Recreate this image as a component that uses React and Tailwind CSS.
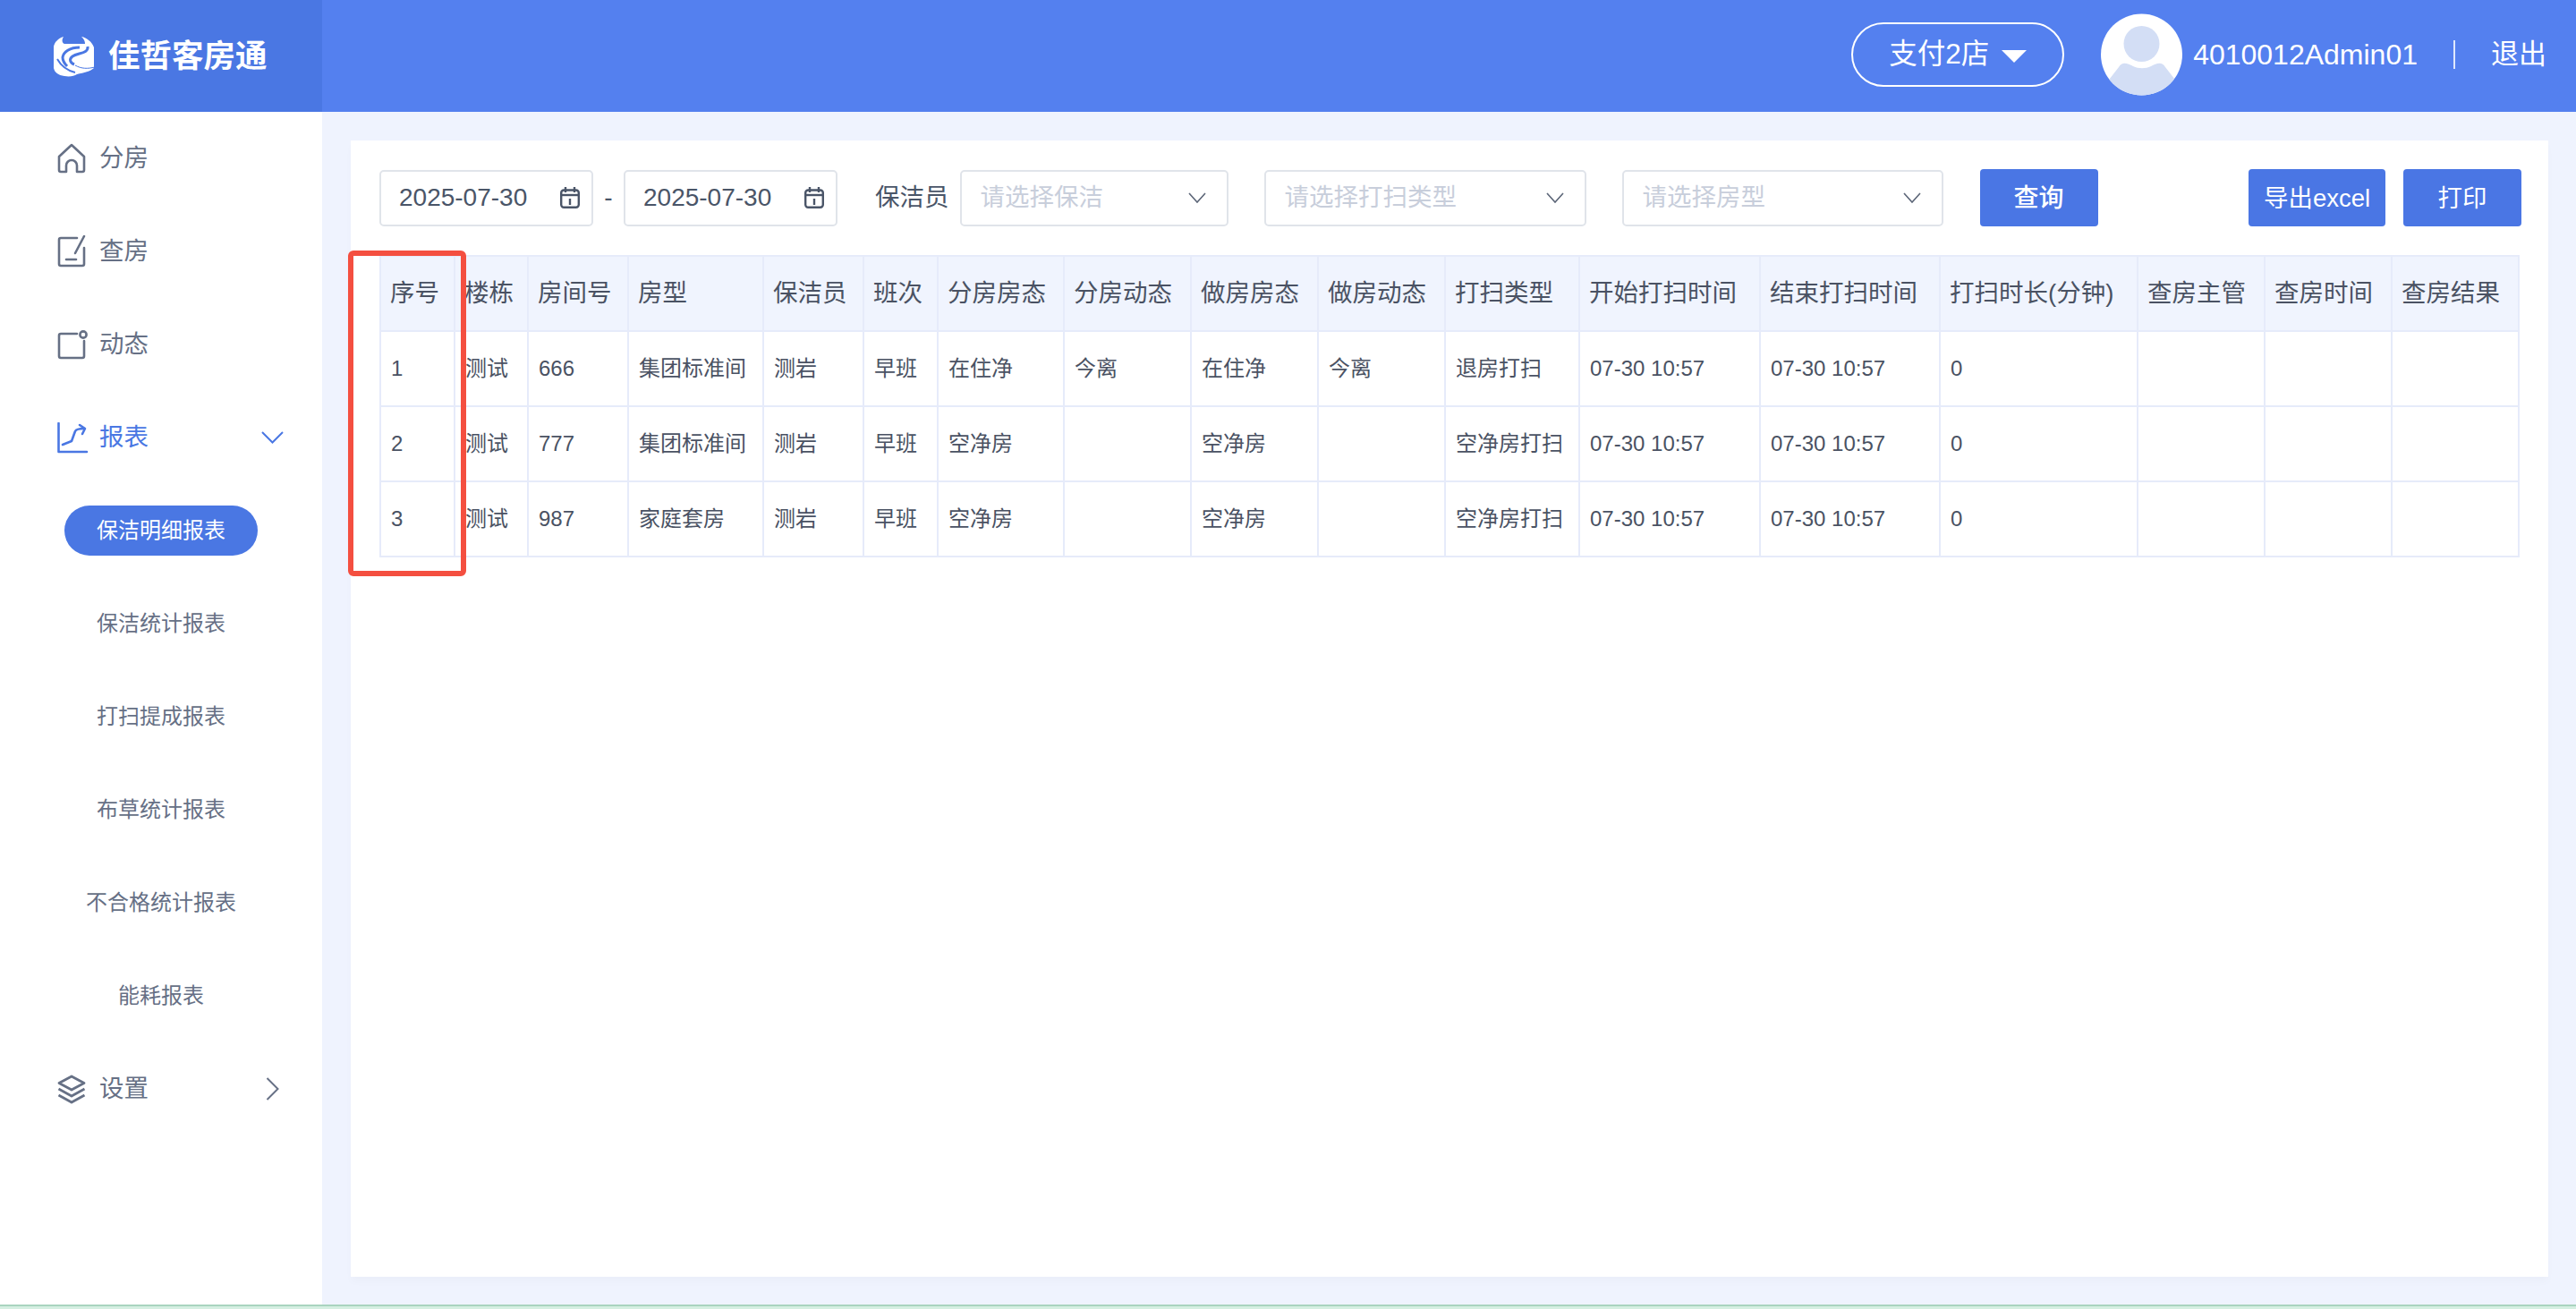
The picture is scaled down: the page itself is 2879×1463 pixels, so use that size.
const FONT = "font-['Liberation_Sans','Noto_Sans_CJK_SC',sans-serif]";

const columns = [
  { title: "序号", width: "w-[83px]" },
  { title: "楼栋", width: "w-[82px]" },
  { title: "房间号", width: "w-[112px]" },
  { title: "房型", width: "w-[151px]" },
  { title: "保洁员", width: "w-[112px]" },
  { title: "班次", width: "w-[83px]" },
  { title: "分房房态", width: "w-[141px]" },
  { title: "分房动态", width: "w-[142px]" },
  { title: "做房房态", width: "w-[142px]" },
  { title: "做房动态", width: "w-[142px]" },
  { title: "打扫类型", width: "w-[150px]" },
  { title: "开始打扫时间", width: "w-[202px]" },
  { title: "结束打扫时间", width: "w-[201px]" },
  { title: "打扫时长(分钟)", width: "w-[221px]" },
  { title: "查房主管", width: "w-[142px]" },
  { title: "查房时间", width: "w-[142px]" },
  { title: "查房结果", width: "w-[142px]" },
];

const rows = [
  ["1", "测试", "666", "集团标准间", "测岩", "早班", "在住净", "今离", "在住净", "今离", "退房打扫", "07-30 10:57", "07-30 10:57", "0", "", "", ""],
  ["2", "测试", "777", "集团标准间", "测岩", "早班", "空净房", "", "空净房", "", "空净房打扫", "07-30 10:57", "07-30 10:57", "0", "", "", ""],
  ["3", "测试", "987", "家庭套房", "测岩", "早班", "空净房", "", "空净房", "", "空净房打扫", "07-30 10:57", "07-30 10:57", "0", "", "", ""],
];

const subMenu = ["保洁明细报表", "保洁统计报表", "打扫提成报表", "布草统计报表", "不合格统计报表", "能耗报表"];

function Logo() {
  return (
    <svg width="46" height="46" viewBox="0 0 46 46" className="shrink-0">
      <path d="M11 1 C5 3 1 7 0 12 V36 C1 41 5 44 12 45 C18 46 23 45 26 43 C34 41 41 40 45 36 V13 C43 7 37 2 31 1 C34 4 35 6 35 9 H12 C9 8 9 4 11 1 Z" fill="#fff" />
      <path d="M38 12 C39 20 27 19 21 23 C17 26 18 30 23 32" fill="none" stroke="#4a77e3" strokeWidth="3" />
      <path d="M29 13 C18 13 11 18 10 24 C10 28 12 31 15 34" fill="none" stroke="#4a77e3" strokeWidth="3" />
      <path d="M4 26 C9 35 16 39 24 41" fill="none" stroke="#4a77e3" strokeWidth="2" />
      <path d="M24 33 C31 37 38 37 46 35" fill="none" stroke="#4a77e3" strokeWidth="1" />
    </svg>
  );
}

function HomeIcon() {
  return (
    <svg width="32" height="34" viewBox="0 0 32 34" fill="none" stroke="currentColor" strokeWidth="2.6" strokeLinejoin="round">
      <path d="M16 2 L30 15 V30 a2 2 0 0 1 -2 2 H22 V25 a6 6 0 0 0 -12 0 V32 H4 a2 2 0 0 1 -2 -2 V15 Z" />
    </svg>
  );
}

function CheckIcon() {
  return (
    <svg width="32" height="36" viewBox="0 0 32 36" fill="none" stroke="currentColor" strokeWidth="2.6" strokeLinecap="round">
      <path d="M22 3 H4 a2 2 0 0 0 -2 2 V32 a2 2 0 0 0 2 2 H28 a2 2 0 0 0 2 -2 V14" />
      <path d="M30 1 L20 20" />
      <path d="M10 27 H21" />
    </svg>
  );
}

function DynamicIcon() {
  return (
    <svg width="34" height="34" viewBox="0 0 34 34" fill="none" stroke="currentColor" strokeWidth="2.6" strokeLinecap="round">
      <path d="M22 5 H4 a2 2 0 0 0 -2 2 V30 a2 2 0 0 0 2 2 H28 a2 2 0 0 0 2 -2 V13" />
      <circle cx="29" cy="6" r="3.6" />
    </svg>
  );
}

function ChartIcon() {
  return (
    <svg width="35" height="35" viewBox="0 0 35 35" fill="none" stroke="currentColor" strokeWidth="2.6" strokeLinecap="round" strokeLinejoin="round">
      <path d="M1.5 1 V33 H33" />
      <path d="M6 25 L16 21 L20 10 C21 8 24 7 30 7" />
      <path d="M25 3 L31 7 L28 13" />
    </svg>
  );
}

function LayersIcon() {
  return (
    <svg width="32" height="33" viewBox="0 0 32 33" fill="none" stroke="currentColor" strokeWidth="2.8" strokeLinejoin="round">
      <path d="M16 2 L30 9.5 L16 17 L2 9.5 Z" />
      <path d="M1.5 16 L16 24 L30.5 16" />
      <path d="M1.5 23 L16 31 L30.5 23" />
    </svg>
  );
}

function CalendarIcon() {
  return (
    <svg width="22" height="24" viewBox="0 0 22 24" fill="none" stroke="#4a5568" strokeWidth="2.4" className="shrink-0">
      <rect x="1.2" y="3.5" width="19.6" height="19.3" rx="3" />
      <path d="M1.2 9 H20.8" />
      <path d="M6 0 V6 M16 0 V6" />
      <path d="M11 13 V20" />
    </svg>
  );
}

function SmallChevron() {
  return (
    <svg width="20" height="12" viewBox="0 0 20 12" fill="none" stroke="#5b6577" strokeWidth="1.6" className="shrink-0">
      <path d="M1 1 L10 11 L19 1" />
    </svg>
  );
}

function MenuDownArrow() {
  return (
    <svg width="25" height="14" viewBox="0 0 25 14" fill="none" stroke="currentColor" strokeWidth="2" className="mr-[-1px]">
      <path d="M1 1 L12.5 12.5 L24 1" />
    </svg>
  );
}

function MenuRightArrow() {
  return (
    <svg width="15" height="26" viewBox="0 0 15 26" fill="none" stroke="currentColor" strokeWidth="2" className="mr-[4px]">
      <path d="M1.5 1 L13.5 13 L1.5 25" />
    </svg>
  );
}

function Avatar() {
  return (
    <svg width="91" height="92" viewBox="0 0 91 92" className="shrink-0">
      <defs>
        <clipPath id="avatarClip">
          <circle cx="45.5" cy="46" r="45.5" />
        </clipPath>
      </defs>
      <circle cx="45.5" cy="46" r="45.5" fill="#fff" />
      <circle cx="45.5" cy="34" r="20" fill="#d3def5" />
      <path clipPath="url(#avatarClip)" d="M6 78 L20 60 C24 53 30 56 36 59 C42 62 50 62 56 59 C62 56 68 53 72 60 L86 78 V92 H6 Z" fill="#d3def5" />
    </svg>
  );
}

function MenuItem({ icon, label, active, arrow }) {
  return (
    <div className={`h-[104px] flex items-center pl-[64px] pr-[44px] ${active ? "text-[#4a77e3]" : "text-[#667085]"}`}>
      <div className="w-[47px] shrink-0 flex items-center">{icon}</div>
      <span className="text-[27.5px] flex-1">{label}</span>
      {arrow}
    </div>
  );
}

function DateBox() {
  return (
    <div className="w-[239px] h-[63px] border-2 border-[#e0e4ea] rounded-[5px] flex items-center justify-between pl-[20px] pr-[13px] text-[28px] text-[#4a5568]">
      <span>2025-07-30</span>
      <CalendarIcon />
    </div>
  );
}

function SelectBox({ width, text }) {
  return (
    <div className={`${width} h-[63px] border-2 border-[#e0e4ea] rounded-[5px] flex items-center justify-between pl-[21px] pr-[23px] text-[27.5px] text-[#c8cedb]`}>
      <span>{text}</span>
      <SmallChevron />
    </div>
  );
}

export default function App() {
  return (
    <div className={`${FONT} h-[1463px] w-full flex flex-col overflow-hidden`}>
      {/* top bar */}
      <header className="h-[125px] shrink-0 bg-[#5480ef] flex items-center text-white">
        <div className="w-[360px] h-full bg-[#4a77e3] flex items-center pl-[60px] gap-[15px]">
          <Logo />
          <span className="text-[35.5px] font-bold pt-[2px]">佳哲客房通</span>
        </div>
        <div className="flex-1 flex items-center justify-end pr-[33px] pb-[3px]">
          <div className="w-[238px] h-[72px] border-2 border-white rounded-full flex items-center pl-[40px] text-[31.5px]">
            <span>支付2店</span>
            <span className="ml-[14px] mt-[3px] w-0 h-0 border-x-[14px] border-x-transparent border-t-[14px] border-t-white"></span>
          </div>
          <div className="ml-[41px]"><Avatar /></div>
          <span className="ml-[12px] text-[32px]">4010012Admin01</span>
          <span className="ml-[40px] w-[2px] h-[32px] bg-[#dfe8fd]"></span>
          <span className="ml-[40px] text-[31px]">退出</span>
        </div>
      </header>

      <div className="flex-1 flex min-h-0">
        {/* left menu */}
        <aside className="w-[360px] shrink-0 bg-white">
          <MenuItem icon={<HomeIcon />} label="分房" />
          <MenuItem icon={<CheckIcon />} label="查房" />
          <MenuItem icon={<DynamicIcon />} label="动态" />
          <MenuItem icon={<ChartIcon />} label="报表" active arrow={<MenuDownArrow />} />
          {subMenu.map((name, i) => (
            <div key={name} className="h-[104px] flex items-center justify-center">
              <span className={`text-[24px] ${i === 0 ? "w-[216px] h-[56px] rounded-full bg-[#4a77e3] text-white flex items-center justify-center" : "text-[#667085]"}`}>
                {name}
              </span>
            </div>
          ))}
          <MenuItem icon={<LayersIcon />} label="设置" arrow={<MenuRightArrow />} />
        </aside>

        {/* content */}
        <main className="flex-1 bg-[#eff3fe] pt-[32px] pl-[32px] pr-[31px] pb-[31px]">
          <div className="h-full bg-white pt-[32px] pl-[32px] pr-[30px] shadow-[0_6px_8px_rgba(0,0,0,0.02)]">
            <div className="flex items-center mb-[32px]">
              <DateBox />
              <span className="w-[34px] text-center text-[28px] text-[#4a5568]">-</span>
              <DateBox />
              <span className="ml-[42px] mr-[12px] text-[27.5px] text-[#4a5568]">保洁员</span>
              <SelectBox width="w-[300px]" text="请选择保洁" />
              <div className="ml-[40px]"><SelectBox width="w-[360px]" text="请选择打扫类型" /></div>
              <div className="ml-[40px]"><SelectBox width="w-[359px]" text="请选择房型" /></div>
              <button className="ml-[41px] w-[132px] h-[64px] rounded-[4px] bg-[#4a76e4] text-white text-[28px] font-medium pt-[2px]">查询</button>
              <div className="ml-auto flex gap-[20px]">
                <button className="w-[153px] h-[64px] rounded-[4px] bg-[#4a76e4] text-white text-[27.5px] pt-[2px]">导出excel</button>
                <button className="w-[132px] h-[64px] rounded-[4px] bg-[#4a76e4] text-white text-[27.5px] pt-[2px]">打印</button>
              </div>
            </div>

            <div className="relative w-[2390px]">
              <table className="w-[2390px] table-fixed border-collapse">
                <colgroup>
                  {columns.map((c) => (
                    <col key={c.title} className={c.width} />
                  ))}
                </colgroup>
                <thead>
                  <tr className="bg-[#f0f4fe]">
                    {columns.map((c) => (
                      <th key={c.title} className="h-[84px] border-2 border-[#e6ebfa] pl-[10px] text-left text-[27.5px] font-normal text-[#4a5263] whitespace-nowrap">
                        {c.title}
                      </th>
                    ))}
                  </tr>
                </thead>
                <tbody>
                  {rows.map((row) => (
                    <tr key={row[0]}>
                      {row.map((cell, i) => (
                        <td key={i} className="h-[84px] border-2 border-[#e6ebfa] pl-[11px] text-[24px] text-[#4a5263] whitespace-nowrap">
                          {cell}
                        </td>
                      ))}
                    </tr>
                  ))}
                </tbody>
              </table>
              {/* red marker around the first column */}
              <div className="absolute left-[-35px] top-[-5px] w-[132px] h-[364px] border-[6px] border-[#f44f40] rounded-[6px]"></div>
            </div>
          </div>
        </main>
      </div>

      <div className="h-[5px] shrink-0 bg-[#d5efe2] border-t-2 border-[#a9d4bf]"></div>
    </div>
  );
}
